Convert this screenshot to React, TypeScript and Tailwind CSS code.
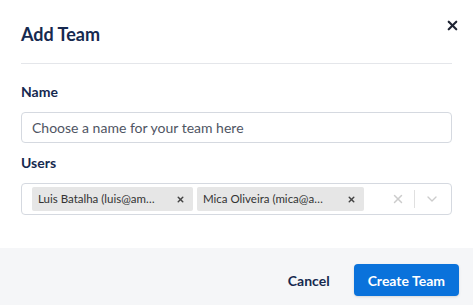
import { X, ChevronDown } from "lucide-react";

type Chip = { label: string; width: number };

const users: Chip[] = [
  { label: "Luis Batalha (luis@amplemarket.com)", width: 161 },
  { label: "Mica Oliveira (mica@amplemarket.com)", width: 167 },
];

export default function App() {
  return (
    <div className="w-[473px] h-[305px] bg-white flex flex-col overflow-hidden font-['Lato',sans-serif] text-[#1c2b4a]">
      {/* Header */}
      <div className="px-[21px] pt-[22px] relative">
        <h2 className="text-[18px] leading-[24px] font-bold text-[#16294f]">Add Team</h2>
        <button className="absolute right-[13px] top-[18px] text-[#1f2433]">
          <X className="w-[15px] h-[15px]" strokeWidth={3.5} />
        </button>
        <div className="mt-[17px] h-px bg-[#e4e6ea]" />
      </div>

      {/* Body */}
      <div className="px-[21px] pt-[19px] flex flex-col">
        <label className="text-[14px] leading-[18px] font-bold text-[#16294f]">Name</label>
        <input
          className="mt-[11px] h-[31px] w-full rounded-[4px] border border-[#d5d9e0] px-[10px] text-[14px] placeholder:text-[#4f5563] outline-none"
          placeholder="Choose a name for your team here"
        />
        <label className="mt-[11px] text-[14px] leading-[18px] font-bold text-[#16294f]">Users</label>
        <div className="mt-[11px] h-[32px] w-full rounded-[4px] border border-[#d5d9e0] flex items-center pl-[10px] pr-[11px]">
          <div className="flex gap-[4px] flex-1 min-w-0">
            {users.map((u) => (
              <div
                key={u.label}
                style={{ width: u.width }}
                className="h-[24px] bg-[#e6e6e6] rounded-[2px] flex items-center pl-[6px] pr-[8px] text-[11.5px] text-[#333333]"
              >
                <span className="truncate w-[120px]">{u.label}</span>
                <X className="ml-auto w-[9px] h-[9px] text-[#444]" strokeWidth={4} />
              </div>
            ))}
          </div>
          <div className="flex items-center gap-[5px] text-[#cccccc]">
            <X className="w-[14px] h-[14px]" strokeWidth={2.5} />
            <div className="w-px h-[18px] bg-[#e0e0e0] mx-[4px]" />
            <ChevronDown className="w-[16px] h-[16px]" strokeWidth={2} />
          </div>
        </div>
      </div>

      {/* Footer */}
      <div className="mt-auto h-[57px] bg-[#f5f6f8] flex items-start justify-end gap-[24px] px-[14px] pt-[16px]">
        <button className="h-[32px] text-[14px] font-bold text-[#16294f]">Cancel</button>
        <button className="h-[32px] px-[14px] rounded-[4px] bg-[#0a72db] text-white text-[14px] font-bold shadow-sm">
          Create Team
        </button>
      </div>
    </div>
  );
}
